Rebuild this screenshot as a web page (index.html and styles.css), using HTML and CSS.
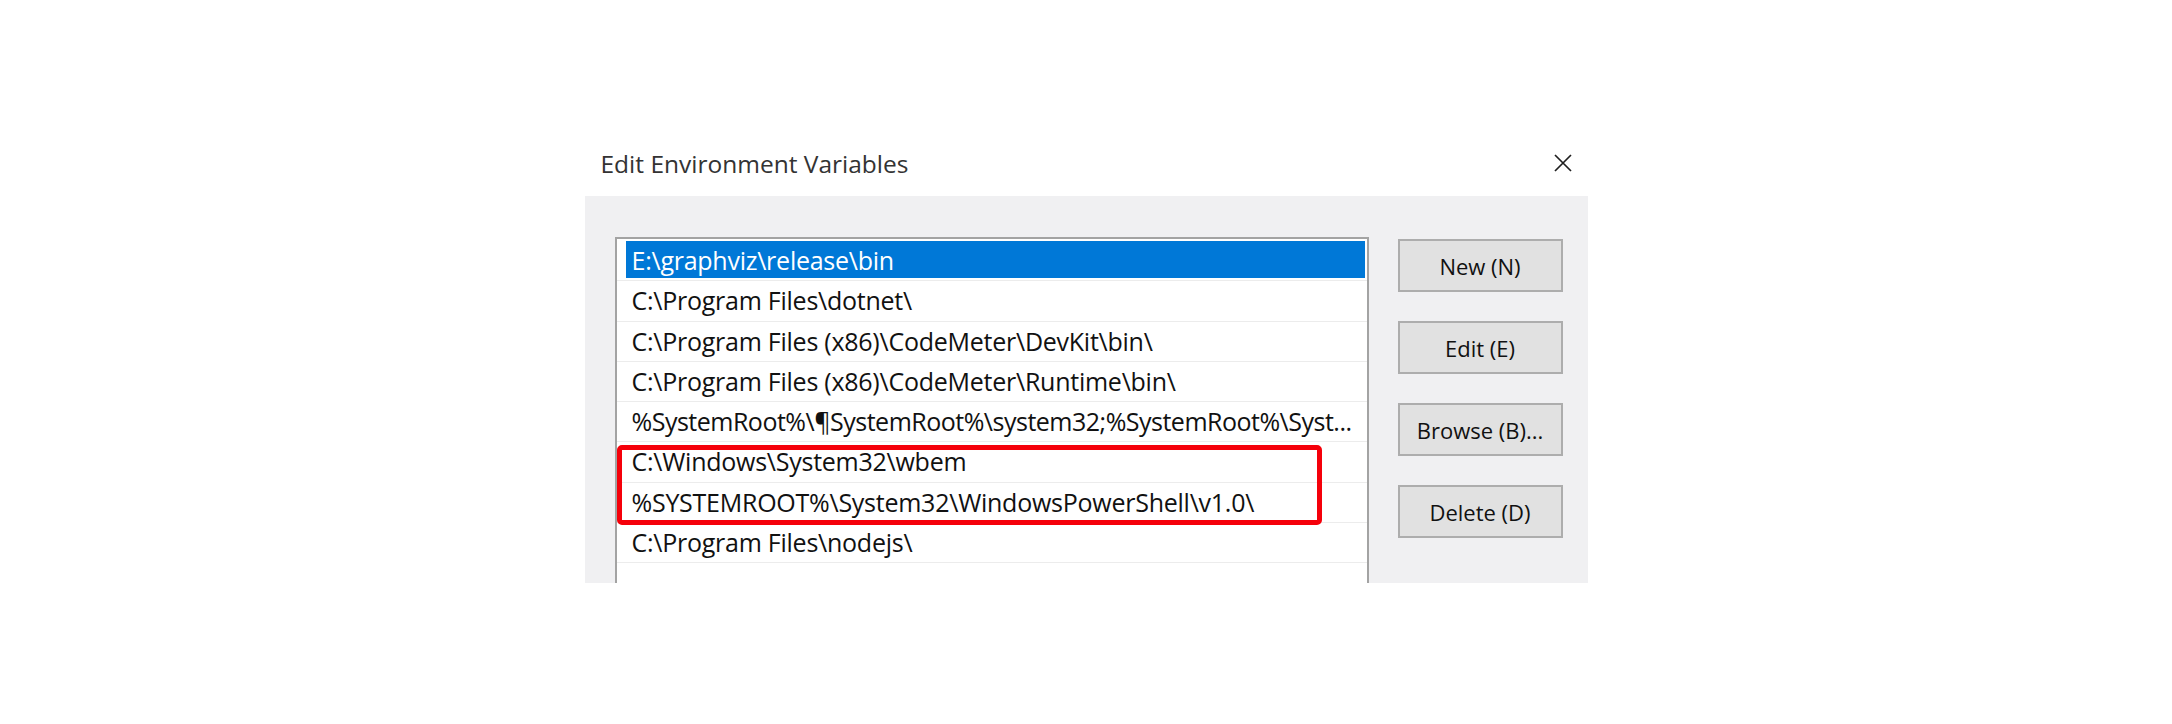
FILE: index.html
```html
<!DOCTYPE html>
<html lang="en">
<head>
  <meta charset="UTF-8" />
  <meta name="viewport" content="width=device-width, initial-scale=1.0" />
  <title>Edit Environment Variables</title>
  <link rel="stylesheet" href="styles.css">
</head>
<body>
  <div class="dialog">
    <div class="titlebar">
      <span class="title">Edit Environment Variables</span>
      <button class="close" aria-label="Close">
        <svg width="20" height="18" viewBox="0 0 20 18">
          <path d="M2 1 L18 17 M18 1 L2 17" stroke="#1f1f1f" stroke-width="1.7" fill="none" />
        </svg>
      </button>
    </div>

    <div class="panel">
      <div class="listbox">
        <div class="row selected"><span class="cell">E:\graphviz\release\bin</span></div>
        <div class="row"><span class="cell">C:\Program Files\dotnet\</span></div>
        <div class="row"><span class="cell">C:\Program Files (x86)\CodeMeter\DevKit\bin\</span></div>
        <div class="row"><span class="cell">C:\Program Files (x86)\CodeMeter\Runtime\bin\</span></div>
        <div class="row"><span class="cell long">%SystemRoot%\¶SystemRoot%\system32;%SystemRoot%\Syst...</span></div>
        <div class="row"><span class="cell">C:\Windows\System32\wbem</span></div>
        <div class="row"><span class="cell">%SYSTEMROOT%\System32\WindowsPowerShell\v1.0\</span></div>
        <div class="row"><span class="cell">C:\Program Files\nodejs\</span></div>
        <div class="row"><span class="cell"></span></div>

        <!-- highlight around the two system rows -->
        <div class="highlight"></div>
      </div>

      <div class="actions">
        <button class="btn">New (N)</button>
        <button class="btn">Edit (E)</button>
        <button class="btn">Browse (B)...</button>
        <button class="btn">Delete (D)</button>
      </div>
    </div>
  </div>
</body>
</html>
```

FILE: styles.css
```css
body {
  margin: 0;
  background: #ffffff;
  font-family: 'Open Sans', 'Noto Sans', sans-serif;
}

.dialog {
  width: 1003px;
  margin: 130px auto 0;
}

.titlebar {
  height: 66px;
  display: flex;
  align-items: center;
  justify-content: space-between;
  padding: 0 15px 0 16px;
}

.title {
  font-size: 24.5px;
  color: #333333;
}

.close {
  border: none;
  background: none;
  padding: 0;
  display: flex;
}

.panel {
  height: 387px;
  box-sizing: border-box;
  overflow: hidden;
  background: #f0f0f2;
  padding: 41px 25px 0 30px;
  display: flex;
  align-items: flex-start;
  gap: 29px;
}

.listbox {
  position: relative;
  width: 754px;
  flex-shrink: 0;
  box-sizing: border-box;
  border: 2px solid #a3a3a3;
  border-bottom: none;
  background: #ffffff;
  padding-top: 2px;
  height: 420px;
}

.row {
  height: 40.25px;
  box-sizing: border-box;
  border-bottom: 1px solid #ececec;
  padding: 0 2px 0 9px;
}

.cell {
  display: block;
  height: 37px;
  line-height: 38px;
  padding-left: 6px;
  font-size: 25px;
  letter-spacing: -0.25px;
  color: #111111;
  white-space: nowrap;
  overflow: hidden;
}

/* trimmed entry has to fit the column */
.cell.long {
  letter-spacing: -0.5px;
}

.row.selected .cell {
  background: #0078d7;
  color: #ffffff;
}

.highlight {
  position: absolute;
  left: 0;
  top: 206px;
  width: 705px;
  height: 80px;
  box-sizing: border-box;
  border: 5px solid #f5000a;
  border-radius: 5px;
}

.actions {
  display: flex;
  flex-direction: column;
  gap: 29px;
  margin-top: 2px;
}

.btn {
  width: 165px;
  height: 53px;
  background: #e1e1e1;
  border: 2px solid #adadad;
  font-family: 'Open Sans', 'Noto Sans', sans-serif;
  font-size: 22px;
  color: #111111;
  padding: 0;
}
```
